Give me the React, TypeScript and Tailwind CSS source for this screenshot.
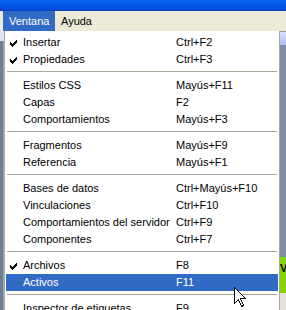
import React from "react";

type Item =
  | { sep: true }
  | { sep?: false; label: string; sc: string; check?: boolean; active?: boolean };

const items: Item[] = [
  { label: "Insertar", sc: "Ctrl+F2", check: true },
  { label: "Propiedades", sc: "Ctrl+F3", check: true },
  { sep: true },
  { label: "Estilos CSS", sc: "Mayús+F11" },
  { label: "Capas", sc: "F2" },
  { label: "Comportamientos", sc: "Mayús+F3" },
  { sep: true },
  { label: "Fragmentos", sc: "Mayús+F9" },
  { label: "Referencia", sc: "Mayús+F1" },
  { sep: true },
  { label: "Bases de datos", sc: "Ctrl+Mayús+F10" },
  { label: "Vinculaciones", sc: "Ctrl+F10" },
  { label: "Comportamientos del servidor", sc: "Ctrl+F9" },
  { label: "Componentes", sc: "Ctrl+F7" },
  { sep: true },
  { label: "Archivos", sc: "F8", check: true },
  { label: "Activos", sc: "F11", active: true },
  { sep: true },
  { label: "Inspector de etiquetas", sc: "F9" },
];

function Check({ white }: { white?: boolean }) {
  const c = white ? "#ffffff" : "#000000";
  const px: [number, number][] = [
    [6, 0],
    [5, 1], [6, 1],
    [0, 2], [4, 2], [5, 2], [6, 2],
    [0, 3], [1, 3], [3, 3], [4, 3], [5, 3],
    [0, 4], [1, 4], [2, 4], [3, 4], [4, 4],
    [1, 5], [2, 5], [3, 5],
    [2, 6],
  ];
  return (
    <svg width="7" height="7" viewBox="0 0 7 7" shapeRendering="crispEdges" className="block">
      {px.map(([x, y], i) => (
        <rect key={i} x={x} y={y} width="1" height="1" fill={c} />
      ))}
    </svg>
  );
}

export default function App() {
  return (
    <div className="relative w-[286px] h-[310px] overflow-hidden bg-[#ece9d8] font-['Liberation_Sans',Arial,sans-serif] text-[11px] leading-none text-black select-none">
      {/* title bar strip */}
      <div className="h-[11px] bg-gradient-to-b from-[#0c63f3] to-[#004ad8] border-b border-[#0a3fb8]" />
      {/* menubar */}
      <div className="h-[20px] flex items-stretch bg-[#ece9d8]">
        <div className="ml-[3px] px-[6px] flex items-center bg-[#316ac5] text-white w-[52px]">Ventana</div>
        <div className="px-[6px] flex items-center">Ayuda</div>
      </div>
      {/* body */}
      <div className="flex h-[279px]">
        {/* left strip */}
        <div className="w-[4px] flex flex-col">
          <div className="h-[10px] bg-[#dfe6f1]" />
          <div className="flex-1 bg-[#6d7f96] border-r border-[#9aa8ba]" />
        </div>
        {/* menu */}
        <div className="w-[276px] bg-white border-l border-r border-[#aca899] px-[1px] pt-[3px]">
          {items.map((it, i) =>
            it.sep ? (
              <div key={i} className="h-[9px] px-[1px] pt-[3px]">
                <div className="h-px bg-[#aca899]" />
              </div>
            ) : (
              <div
                key={i}
                className={
                  "relative h-[17px] grid grid-cols-[170px_1fr] items-center " +
                  (it.active ? "bg-[#316ac5] text-white" : "")
                }
              >
                {it.check && (
                  <div className="absolute left-[4px] top-[6px]">
                    <Check white={it.active} />
                  </div>
                )}
                <span className="pl-[17px] whitespace-nowrap">{it.label}</span>
                <span className="whitespace-nowrap">{it.sc}</span>
              </div>
            )
          )}
        </div>
        {/* right strip */}
        <div className="w-[6px] flex flex-col border-t border-[#9c9c9c]">
          <div className="h-[13px] bg-gradient-to-b from-[#d6e2fa] to-[#a9bfe8]" />
          <div className="h-[212px] bg-[#7d8fa3]" />
          <div className="h-[36px] bg-[#84d400] relative overflow-hidden">
            <span className="absolute left-[0px] top-[6px] text-[11px] font-bold text-black">V</span>
          </div>
          <div className="flex-1 bg-[#e4e2d8]" />
        </div>
      </div>
      {/* mouse cursor */}
      <svg
        className="absolute left-[234px] top-[287px]"
        width="13"
        height="21"
        viewBox="0 0 13 21"
        shapeRendering="crispEdges"
      >
        <path
          d="M0.5 0.5 L0.5 16.5 L4.5 12.5 L7.5 19.5 L9.5 18.5 L6.5 11.5 L11.5 11.5 Z"
          fill="#ffffff"
          stroke="#000000"
          strokeWidth="1"
          strokeLinejoin="miter"
        />
      </svg>
    </div>
  );
}
